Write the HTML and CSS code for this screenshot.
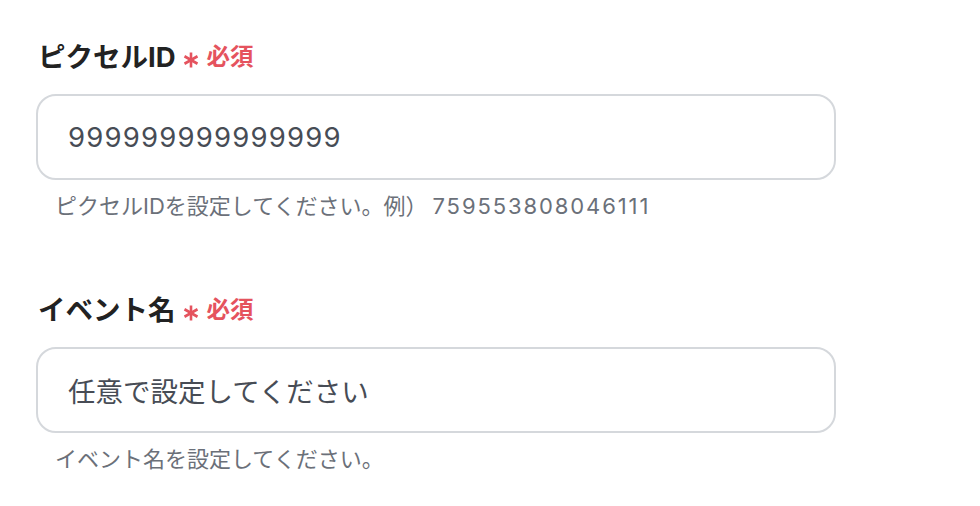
FILE: index.html
```html
<!DOCTYPE html>
<html lang="ja">
<head>
<meta charset="utf-8">
<title>フォーム</title>
<link rel="stylesheet" href="styles.css">
</head>
<body>
<main class="form">
  <div class="field">
    <div class="label">
      <span class="label-text">ピクセルID</span>
      <svg class="req-mark" viewBox="0 0 16 16" width="16" height="16" aria-hidden="true">
        <g stroke="#e5535e" stroke-width="2.6" stroke-linecap="butt">
          <line x1="8" y1="0.5" x2="8" y2="15.5"/>
          <line x1="1.5" y1="4.25" x2="14.5" y2="11.75"/>
          <line x1="1.5" y1="11.75" x2="14.5" y2="4.25"/>
        </g>
      </svg>
      <span class="req-text">必須</span>
    </div>
    <input class="text-input text-input--numeric" type="text" value="999999999999999">
    <p class="help">ピクセルIDを設定してください。例）<span class="help-num">759553808046111</span></p>
  </div>
  <div class="field">
    <div class="label">
      <span class="label-text">イベント名</span>
      <svg class="req-mark" viewBox="0 0 16 16" width="16" height="16" aria-hidden="true">
        <g stroke="#e5535e" stroke-width="2.6" stroke-linecap="butt">
          <line x1="8" y1="0.5" x2="8" y2="15.5"/>
          <line x1="1.5" y1="4.25" x2="14.5" y2="11.75"/>
          <line x1="1.5" y1="11.75" x2="14.5" y2="4.25"/>
        </g>
      </svg>
      <span class="req-text">必須</span>
    </div>
    <input class="text-input" type="text" value="任意で設定してください">
    <p class="help">イベント名を設定してください。</p>
  </div>
</main>
</body>
</html>
```

FILE: styles.css
```css
* { box-sizing: border-box; }

html, body {
  margin: 0;
  padding: 0;
  background: #ffffff;
}

body {
  font-family: "Inter", "Noto Sans CJK JP", sans-serif;
}

.form {
  padding: 38px 0 0 36px;
  width: 836px;
}

.field {
  margin-bottom: 70px;
}

.field:last-child {
  margin-bottom: 0;
}

.label {
  display: flex;
  align-items: center;
  height: 38px;
  margin-bottom: 18px;
}

.label-text {
  font-size: 27.5px;
  font-weight: 700;
  color: #222222;
  line-height: 38px;
  padding-left: 2px;
}

.req-mark {
  margin: 6px 8px 0 7px;
  flex: none;
}

.req-text {
  font-size: 23.5px;
  font-weight: 700;
  color: #e5535e;
  line-height: 38px;
}

.text-input {
  display: block;
  width: 800px;
  height: 86px;
  border: 2px solid #d5d8dc;
  border-radius: 20px;
  padding: 0 30px;
  font-family: "Inter", "Noto Sans CJK JP", sans-serif;
  font-size: 27.5px;
  color: #474c55;
  background: #ffffff;
  outline: none;
}

.text-input--numeric {
  letter-spacing: 1.2px;
}

.help {
  margin: 11px 0 0 0;
  padding-left: 19px;
  font-size: 22px;
  line-height: 30px;
  color: #6b7079;
}

.help-num {
  margin-left: 5px;
  letter-spacing: 1.9px;
}
```
